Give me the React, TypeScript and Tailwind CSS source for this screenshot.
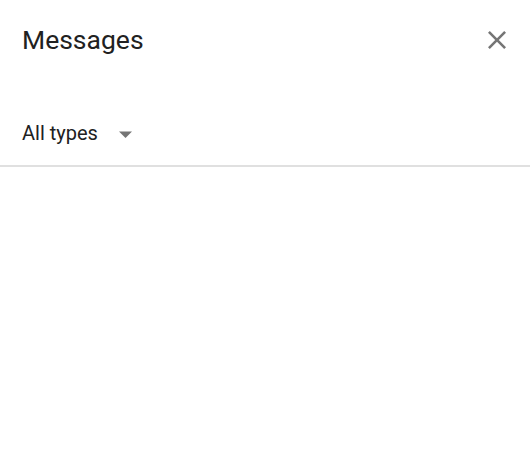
import React from "react";

export default function App() {
  return (
    <div className="w-[530px] h-[454px] bg-white flex flex-col font-['Roboto',sans-serif] text-[#212121]">
      {/* header */}
      <div className="flex items-start justify-between pl-[22px] pr-[24px] pt-[24px]">
        <h1 className="text-[26.5px] leading-[32px] font-normal">Messages</h1>
        <button className="mt-[7px] text-[#757575]">
          <svg width="18" height="18" viewBox="5 5 14 14" fill="currentColor">
            <path d="M19 6.41L17.59 5 12 10.59 6.41 5 5 6.41 10.59 12 5 17.59 6.41 19 12 13.41 17.59 19 19 17.59 13.41 12z" />
          </svg>
        </button>
      </div>

      {/* type filter */}
      <div className="flex items-start pl-[22px] mt-[65px]">
        <span className="text-[20px] leading-[24px]">All types</span>
        <svg className="ml-[21px] mt-[10px] text-[#757575]" width="13" height="7" viewBox="0 0 13 7" fill="currentColor">
          <path d="M0 0.5h13L6.5 7z" />
        </svg>
      </div>

      <div className="mt-[20px] h-[2px] bg-[#e0e0e0]" />
    </div>
  );
}
